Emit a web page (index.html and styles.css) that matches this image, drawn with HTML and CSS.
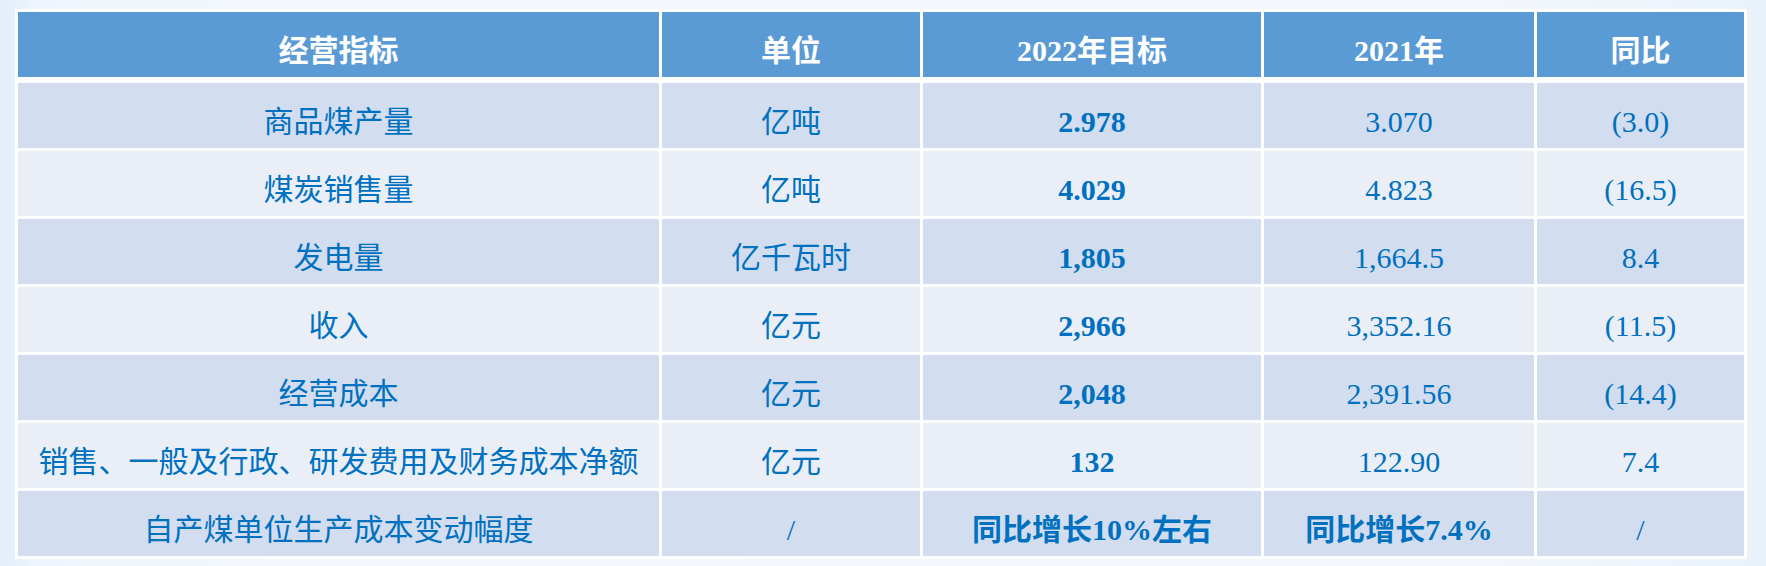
FILE: index.html
```html
<!DOCTYPE html>
<html lang="zh-CN">
<head>
<meta charset="utf-8">
<title>经营指标</title>
<link rel="stylesheet" href="styles.css">
</head>
<body>
<div class="page">
  <div class="sheet">
    <div class="row head">
      <div class="cell">经营指标</div>
      <div class="cell">单位</div>
      <div class="cell">2022年目标</div>
      <div class="cell">2021年</div>
      <div class="cell">同比</div>
    </div>
    <div class="row odd">
      <div class="cell">商品煤产量</div>
      <div class="cell">亿吨</div>
      <div class="cell strong">2.978</div>
      <div class="cell">3.070</div>
      <div class="cell">(3.0)</div>
    </div>
    <div class="row even">
      <div class="cell">煤炭销售量</div>
      <div class="cell">亿吨</div>
      <div class="cell strong">4.029</div>
      <div class="cell">4.823</div>
      <div class="cell">(16.5)</div>
    </div>
    <div class="row odd">
      <div class="cell">发电量</div>
      <div class="cell">亿千瓦时</div>
      <div class="cell strong">1,805</div>
      <div class="cell">1,664.5</div>
      <div class="cell">8.4</div>
    </div>
    <div class="row even">
      <div class="cell">收入</div>
      <div class="cell">亿元</div>
      <div class="cell strong">2,966</div>
      <div class="cell">3,352.16</div>
      <div class="cell">(11.5)</div>
    </div>
    <div class="row odd">
      <div class="cell">经营成本</div>
      <div class="cell">亿元</div>
      <div class="cell strong">2,048</div>
      <div class="cell">2,391.56</div>
      <div class="cell">(14.4)</div>
    </div>
    <div class="row even">
      <div class="cell">销售、一般及行政、研发费用及财务成本净额</div>
      <div class="cell">亿元</div>
      <div class="cell strong">132</div>
      <div class="cell">122.90</div>
      <div class="cell">7.4</div>
    </div>
    <div class="row odd">
      <div class="cell">自产煤单位生产成本变动幅度</div>
      <div class="cell">/</div>
      <div class="cell strong">同比增长10%左右</div>
      <div class="cell strong">同比增长7.4%</div>
      <div class="cell">/</div>
    </div>
  </div>
</div>
</body>
</html>
```

FILE: styles.css
```css
html, body {
  margin: 0;
  padding: 0;
}

body {
  width: 1766px;
  height: 566px;
  overflow: hidden;
  background:
    linear-gradient(90deg, #e2eef9 0px, #eef5fc 40px, #f4f8fd 300px, #f3f7fc 1500px, #e9f2fa 1766px);
}

.page {
  padding: 9px 0 0 15px;
}

.sheet {
  width: 1726px;
  padding: 3px;
  background: #ffffff;
  display: flex;
  flex-direction: column;
  gap: 3px;
}

.row {
  display: grid;
  grid-template-columns: 641px 258px 338px 270px 207px;
  gap: 3px;
  height: 65px;
}

.row.head {
  margin-bottom: 3px;
}

.cell {
  display: flex;
  align-items: center;
  justify-content: center;
  padding-top: 12px;
  box-sizing: border-box;
  height: 65px;
  font-family: "Liberation Serif", "Noto Sans CJK SC", sans-serif;
  font-size: 30px;
  line-height: 34px;
  color: #0070c0;
  white-space: nowrap;
}

.head .cell {
  background: #5b9bd5;
  color: #ffffff;
  font-weight: 700;
}

.odd .cell {
  background: #d2deef;
}

.even .cell {
  background: #eaeff7;
}

.strong {
  font-weight: 700;
}
```
